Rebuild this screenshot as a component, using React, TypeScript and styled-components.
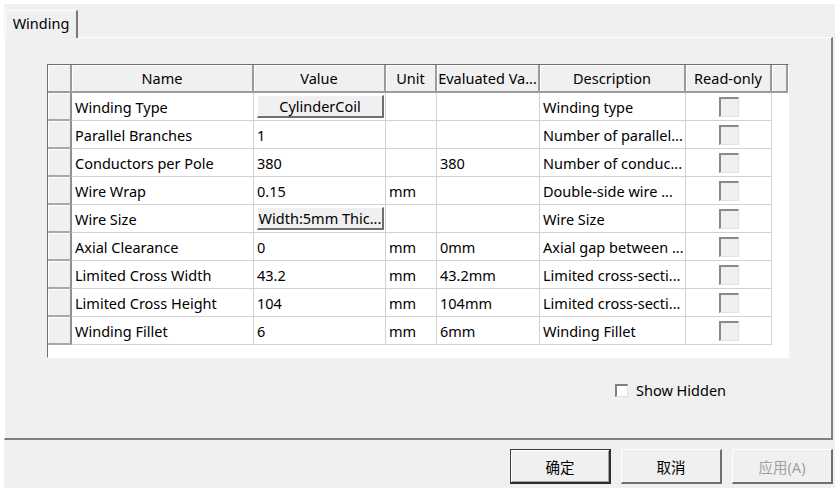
import styled, { createGlobalStyle } from "styled-components";

const GlobalStyle = createGlobalStyle`
    html, body {
        margin: 0;
        padding: 0;
        background: #ffffff;
    }
    body {
        font-family: "Noto Sans", "Noto Sans CJK SC", sans-serif;
        font-size: 14.5px;
        color: #000000;
    }
`;

const Page = styled.div`
    padding: 4px 0 0 4px;
    width: 839px;
    height: 493px;
    box-sizing: border-box;
`;

const Dialog = styled.div`
    width: 831px;
    height: 484px;
    background: #f0f0f0;
    display: flex;
    flex-direction: column;
`;

const TabStrip = styled.div`
    height: 33px;
    display: flex;
    align-items: flex-end;
    padding-left: 1px;
`;

const Tab = styled.div`
    width: 73px;
    height: 28px;
    box-sizing: border-box;
    margin-bottom: -1px;
    border-top: 1px solid #ffffff;
    border-left: 1px solid #ffffff;
    border-right: 2px solid #7a7a7a;
    background: #f0f0f0;
    display: flex;
    justify-content: center;
    padding-top: 2px;
    position: relative;
    z-index: 1;
    user-select: none;
`;

const TabPane = styled.div`
    width: 829px;
    height: 403px;
    box-sizing: border-box;
    border-top: 1px solid #ffffff;
    border-left: 1px solid #ffffff;
    border-right: 2px solid #7f7f7f;
    border-bottom: 2px solid #7f7f7f;
    padding: 26px 0 0 42px;
    display: flex;
    flex-direction: column;
`;

const Viewport = styled.div`
    width: 742px;
    height: 294px;
    box-sizing: border-box;
    border-top: 1px solid #707070;
    border-left: 1px solid #707070;
    border-right: 1px solid #ffffff;
    border-bottom: 1px solid #ffffff;
    background: #ffffff;
    display: flex;
    flex-direction: column;
`;

const Row = styled.div`
    display: flex;
    height: 28px;
`;

const HeaderCell = styled.div<{ $w: number }>`
    width: ${(p) => p.$w}px;
    flex: none;
    box-sizing: border-box;
    background: #f0f0f0;
    border-right: 2px solid #9b9b9b;
    border-bottom: 2px solid #9b9b9b;
    box-shadow: inset 1px 1px 0 #ffffff;
    display: flex;
    align-items: center;
    justify-content: center;
    white-space: nowrap;
    overflow: hidden;
`;

const RowHeader = styled.div`
    width: 24px;
    flex: none;
    box-sizing: border-box;
    background: #f0f0f0;
    border-right: 2px solid #8f8f8f;
    border-bottom: 2px solid #a8a8a8;
    box-shadow: inset 1px 1px 0 #ffffff;
`;

const Cell = styled.div<{ $w: number; $center?: boolean }>`
    width: ${(p) => p.$w}px;
    flex: none;
    box-sizing: border-box;
    border-right: 1px solid #d2d2d2;
    border-bottom: 1px solid #d2d2d2;
    padding-left: 3px;
    display: flex;
    align-items: center;
    justify-content: ${(p) => (p.$center ? "center" : "flex-start")};
    white-space: nowrap;
    overflow: hidden;
`;

const CellButton = styled.div`
    flex: 1;
    height: 23px;
    margin-right: 1px;
    box-sizing: border-box;
    background: #f0f0f0;
    border-top: 1px solid #ffffff;
    border-left: 1px solid #ffffff;
    border-right: 2px solid #6e6e6e;
    border-bottom: 2px solid #6e6e6e;
    display: flex;
    align-items: center;
    justify-content: center;
    white-space: nowrap;
`;

const ReadOnlyBox = styled.div`
    width: 20px;
    height: 20px;
    box-sizing: border-box;
    background: #f0f0f0;
    border-top: 2px solid #8a8a8a;
    border-left: 2px solid #8a8a8a;
    border-right: 1px solid #e3e3e3;
    border-bottom: 1px solid #e3e3e3;
    margin-left: -3px;
`;

const OptionRow = styled.label`
    display: flex;
    align-items: center;
    gap: 8px;
    margin: 25px 0 0 568px;
    height: 14px;
    user-select: none;
`;

const SmallCheck = styled.span`
    width: 13px;
    height: 13px;
    box-sizing: border-box;
    background: #ffffff;
    border-top: 2px solid #808080;
    border-left: 2px solid #808080;
    border-right: 1px solid #e0e0e0;
    border-bottom: 1px solid #e0e0e0;
`;

const ButtonBar = styled.div`
    flex: 1;
    display: flex;
    justify-content: flex-end;
    align-items: flex-start;
    gap: 10px;
    padding: 9px 2px 0 0;
`;

const DialogButton = styled.div<{ $default?: boolean; $disabled?: boolean }>`
    width: 101px;
    height: 35px;
    box-sizing: border-box;
    background: #f0f0f0;
    border-top: 1px solid ${(p) => (p.$default ? "#3c3c3c" : "#ffffff")};
    border-left: 1px solid ${(p) => (p.$default ? "#3c3c3c" : "#ffffff")};
    border-right: 2px solid ${(p) => (p.$default ? "#2e2e2e" : "#6e6e6e")};
    border-bottom: 2px solid ${(p) => (p.$default ? "#2e2e2e" : "#6e6e6e")};
    box-shadow: ${(p) => (p.$default ? "inset 1px 1px 0 #ffffff, inset -1px -1px 0 #a0a0a0" : "none")};
    color: ${(p) => (p.$disabled ? "#a0a0a0" : "#000000")};
    display: flex;
    align-items: center;
    justify-content: center;
    user-select: none;
`;

const widths = [24, 182, 132, 51, 103, 146, 86, 16];
const headers = ["", "Name", "Value", "Unit", "Evaluated Va...", "Description", "Read-only", ""];

type Prop = {
    name: string;
    value: string;
    button?: boolean;
    unit: string;
    evaluated: string;
    description: string;
};

const props: Prop[] = [
    { name: "Winding Type", value: "CylinderCoil", button: true, unit: "", evaluated: "", description: "Winding type" },
    { name: "Parallel Branches", value: "1", unit: "", evaluated: "", description: "Number of parallel..." },
    { name: "Conductors per Pole", value: "380", unit: "", evaluated: "380", description: "Number of conduc..." },
    { name: "Wire Wrap", value: "0.15", unit: "mm", evaluated: "", description: "Double-side wire ..." },
    { name: "Wire Size", value: "Width:5mm Thic...", button: true, unit: "", evaluated: "", description: "Wire Size" },
    { name: "Axial Clearance", value: "0", unit: "mm", evaluated: "0mm", description: "Axial gap between ..." },
    { name: "Limited Cross Width", value: "43.2", unit: "mm", evaluated: "43.2mm", description: "Limited cross-secti..." },
    { name: "Limited Cross Height", value: "104", unit: "mm", evaluated: "104mm", description: "Limited cross-secti..." },
    { name: "Winding Fillet", value: "6", unit: "mm", evaluated: "6mm", description: "Winding Fillet" },
];

const PropertyRow = ({ p }: { p: Prop }) => (
    <Row>
        <RowHeader />
        <Cell $w={widths[1]}>{p.name}</Cell>
        <Cell $w={widths[2]}>{p.button ? <CellButton>{p.value}</CellButton> : p.value}</Cell>
        <Cell $w={widths[3]}>{p.unit}</Cell>
        <Cell $w={widths[4]}>{p.evaluated}</Cell>
        <Cell $w={widths[5]}>{p.description}</Cell>
        <Cell $w={widths[6]} $center>
            <ReadOnlyBox />
        </Cell>
    </Row>
);

const App = () => {
    return (
        <Page>
            <GlobalStyle />
            <Dialog>
                <TabStrip>
                    <Tab>Winding</Tab>
                </TabStrip>
                <TabPane>
                    <Viewport>
                        <Row>
                            {headers.map((h, i) => (
                                <HeaderCell key={i} $w={widths[i]}>
                                    {h}
                                </HeaderCell>
                            ))}
                        </Row>
                        {props.map((p) => (
                            <PropertyRow key={p.name} p={p} />
                        ))}
                    </Viewport>
                    <OptionRow>
                        <SmallCheck />
                        Show Hidden
                    </OptionRow>
                </TabPane>
                <ButtonBar>
                    <DialogButton $default>确定</DialogButton>
                    <DialogButton>取消</DialogButton>
                    <DialogButton $disabled>应用(A)</DialogButton>
                </ButtonBar>
            </Dialog>
        </Page>
    );
};

export default App;
